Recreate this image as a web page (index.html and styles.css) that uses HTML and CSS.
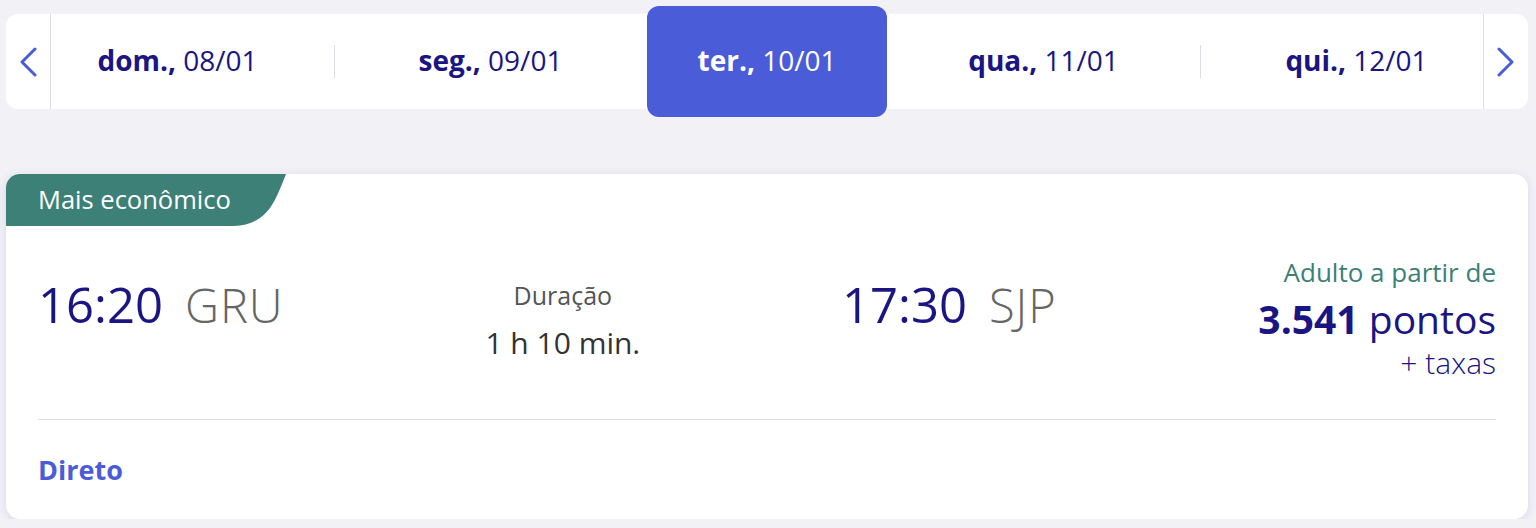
FILE: index.html
```html
<!DOCTYPE html>
<html>

<head>
    <meta charset="UTF-8">
    <title>Voos</title>
    <link rel="stylesheet" href="styles.css">
</head>

<body>
    <div class="dates">
        <a href="#" class="arrow prev">
            <svg width="18" height="30" viewBox="0 0 18 30"><polyline points="16,2 3,15 16,28" /></svg>
        </a>
        <div class="days">
            <a href="#" class="day"><b>dom.,</b> 08/01</a>
            <span class="sep"></span>
            <a href="#" class="day"><b>seg.,</b> 09/01</a>
            <a href="#" class="day active"><b>ter.,</b> 10/01</a>
            <a href="#" class="day"><b>qua.,</b> 11/01</a>
            <span class="sep"></span>
            <a href="#" class="day"><b>qui.,</b> 12/01</a>
        </div>
        <a href="#" class="arrow next">
            <svg width="18" height="30" viewBox="0 0 18 30"><polyline points="2,2 15,15 2,28" /></svg>
        </a>
    </div>

    <div class="card">
        <div class="badge">Mais econômico</div>
        <div class="flight">
            <div class="point">
                <span class="time">16:20</span>
                <span class="airport">GRU</span>
            </div>
            <div class="duration">
                <p class="label">Duração</p>
                <p class="value">1 h 10 min.</p>
            </div>
            <div class="point">
                <span class="time">17:30</span>
                <span class="airport">SJP</span>
            </div>
            <div class="price">
                <p class="from">Adulto a partir de</p>
                <p class="points"><b>3.541</b> pontos</p>
                <p class="tax">+ taxas</p>
            </div>
        </div>
        <div class="stops">Direto</div>
    </div>
</body>

</html>
```

FILE: styles.css
```css
/* reset */
body,
p {
    margin: 0;
    padding: 0;
}

a {
    text-decoration: none;
    color: inherit;
}

body {
    background: #f2f1f6;
    padding: 14px 8px 0 6px;
    font-family: "Open Sans", "Noto Sans", sans-serif;
    color: #1b1583;
}

/* barra de datas */
.dates {
    display: flex;
    height: 95px;
    background: #fff;
    border-radius: 12px;
}

.arrow {
    width: 44px;
    flex: none;
    display: flex;
    align-items: center;
    justify-content: center;
}

.arrow polyline {
    fill: none;
    stroke: #4a5cd8;
    stroke-width: 3;
    stroke-linecap: round;
    stroke-linejoin: round;
}

.prev {
    border-right: 1px solid #dcdce2;
}

.next {
    border-left: 1px solid #dcdce2;
}

.days {
    flex: 1;
    display: flex;
}

.day {
    flex: 1;
    display: flex;
    align-items: center;
    justify-content: center;
    padding-bottom: 4px;
    font-size: 28px;
    white-space: pre;
}

.day b {
    font-weight: 700;
}

.sep {
    width: 60px;
    flex: none;
    display: flex;
    justify-content: center;
    align-items: center;
}

.sep::before {
    content: "";
    width: 1px;
    height: 33px;
    background: #dcdce2;
}

.day.active {
    flex: 0 0 240px;
    margin: -8px 30px;
    background: #4a5cd8;
    color: #fff;
    border-radius: 12px;
}

/* cartao do voo */
.card {
    margin-top: 65px;
    height: 345px;
    background: #fff;
    border-radius: 14px;
    overflow: hidden;
    box-shadow: 0 2px 10px rgba(70, 60, 150, 0.14);
    display: flex;
    flex-direction: column;
}

.badge {
    width: 280px;
    height: 52px;
    box-sizing: border-box;
    padding-left: 32px;
    background: #3c8078;
    color: #fff;
    font-size: 25.5px;
    line-height: 50px;
    clip-path: path("M0 0 H280 C276 10 271 24 264 34 C255 46 243 52 228 52 H0 Z");
}

.flight {
    display: flex;
    justify-content: space-between;
    align-items: center;
    margin: 0 32px;
    padding: 24px 0 29px;
    border-bottom: 1px solid #dedee2;
}

.point {
    display: flex;
    align-items: baseline;
    gap: 22px;
    padding-bottom: 32px;
}

.time {
    font-size: 49px;
}

.airport {
    font-size: 47px;
    font-weight: 300;
    color: #666;
    letter-spacing: 1px;
}

.duration {
    text-align: center;
    padding-top: 6px;
}

.duration .label {
    font-size: 25px;
    color: #555;
    line-height: 40px;
}

.duration .value {
    font-size: 30px;
    color: #333;
    line-height: 56px;
}

.price {
    text-align: right;
    padding-bottom: 8px;
}

.price .from {
    font-size: 26px;
    color: #3c8078;
    line-height: 44px;
}

.price .points {
    font-size: 39px;
    line-height: 50px;
}

.price .tax {
    font-size: 30px;
    line-height: 38px;
    font-weight: 300;
}

.stops {
    flex: 1;
    display: flex;
    align-items: center;
    padding: 0 32px;
    font-size: 27px;
    font-weight: 700;
    color: #4a5cd8;
}
```
